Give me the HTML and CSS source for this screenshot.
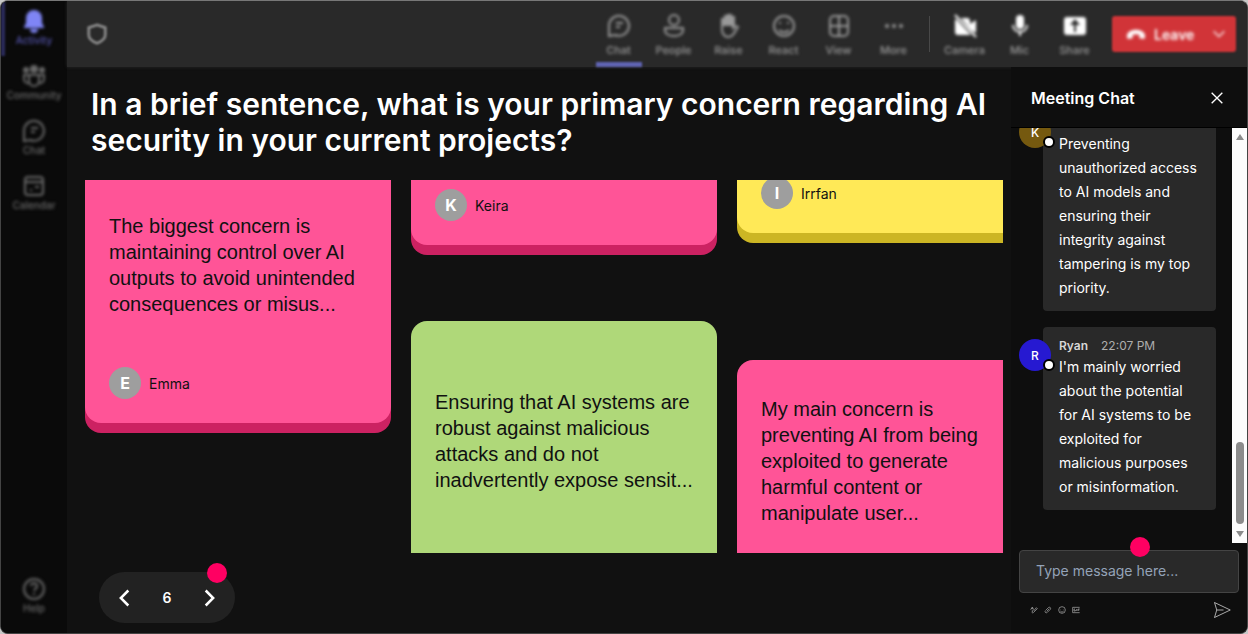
FILE: index.html
```html
<!DOCTYPE html>
<html lang="en">
<head>
<meta charset="utf-8">
<title>Meeting</title>
<link rel="stylesheet" href="styles.css">
</head>
<body>
<div class="app">

  <nav class="rail">
    <a class="rail-item active" href="#">
      <svg viewBox="0 0 24 24"><path fill="currentColor" stroke="none" d="M12 1a8 8 0 0 0-8 8v5l-2 4v1h20v-1l-2-4V9a8 8 0 0 0-8-8zM8 20a4 4 0 0 0 8 0z"/></svg>
      <span>Activity</span>
    </a>
    <a class="rail-item" href="#">
      <svg viewBox="0 0 24 24"><g fill="currentColor" stroke="none"><circle cx="12" cy="5" r="4"/><circle cx="4" cy="6" r="3"/><circle cx="20" cy="6" r="3"/></g><path d="M7 11h10v6a5 5 0 0 1-10 0zM7 11H2v4a4 4 0 0 0 5 4M17 11h5v4a4 4 0 0 1-5 4"/></svg>
      <span>Community</span>
    </a>
    <a class="rail-item" href="#">
      <svg viewBox="0 0 24 24"><path d="M2 22V11a10 10 0 1 1 6 10zM9 9h7M9 13h4"/></svg>
      <span>Chat</span>
    </a>
    <a class="rail-item" href="#">
      <svg viewBox="0 0 24 24"><rect x="3" y="3" width="18" height="18" rx="3"/><path d="M3 8h18M8 16h2M13 13h4"/></svg>
      <span>Calendar</span>
    </a>
    <a class="rail-item help" href="#">
      <svg viewBox="0 0 24 24"><circle cx="12" cy="12" r="10"/><path d="M9 9a3 3 0 1 1 4 3l-1 2M12 16v2"/></svg>
      <span>Help</span>
    </a>
  </nav>

  <div class="stage">
    <header class="topbar">
      <svg class="shield" viewBox="0 0 24 24"><path d="M12 2l9 3v8c0 4-4 7-9 9-5-2-9-5-9-9V5z"/></svg>
      <div class="tools">
        <button class="tool selected"><svg viewBox="0 0 24 24"><path d="M2 22V11a10 10 0 1 1 6 10zM9 9h7M9 13h4"/></svg><span>Chat</span></button>
        <button class="tool"><svg viewBox="0 0 24 24"><circle cx="12" cy="6" r="5"/><path d="M3 14h18v2c0 4-4 6-9 6s-9-2-9-6z"/></svg><span>People</span></button>
        <button class="tool"><svg viewBox="0 0 24 24"><path fill="currentColor" d="M5 11V5h3V2h3V1h3v2h3v8z"/><path d="M5 9v7c0 4 3 7 6 7 5 0 6-4 10-10-2-2-4 0-5 1V5"/></svg><span>Raise</span></button>
        <button class="tool"><svg viewBox="0 0 24 24"><circle cx="12" cy="12" r="10"/><path d="M8 8v2M16 8v2M7 16c3 3 7 3 10 0"/></svg><span>React</span></button>
        <button class="tool"><svg viewBox="0 0 24 24"><rect x="3" y="2" width="18" height="20" rx="4"/><path d="M12 2v20M3 12h18"/></svg><span>View</span></button>
        <button class="tool"><svg viewBox="0 0 24 24"><g fill="currentColor" stroke="none"><circle cx="5" cy="12" r="2"/><circle cx="12" cy="12" r="2"/><circle cx="19" cy="12" r="2"/></g></svg><span>More</span></button>
      </div>
      <div class="tools devices">
        <button class="tool"><svg viewBox="0 0 24 24"><path fill="currentColor" stroke="none" d="M3 5l15 16H5a3 3 0 0 1-3-3V6zM8 4h6a3 3 0 0 1 3 3v3l6-4v13l-5-3z"/><path d="M2 1l21 22"/></svg><span>Camera</span></button>
        <button class="tool"><svg viewBox="0 0 24 24"><rect x="8" y="1" width="8" height="14" rx="4" fill="currentColor" stroke="none"/><path d="M5 11c0 9 14 9 14 0M12 18v4"/></svg><span>Mic</span></button>
        <button class="tool"><svg viewBox="0 0 24 24"><path fill="currentColor" stroke="none" fill-rule="evenodd" d="M4 3h16a3 3 0 0 1 3 3v12a3 3 0 0 1-3 3H4a3 3 0 0 1-3-3V6a3 3 0 0 1 3-3zM12 5l-5 6h4v7h2v-7h4z"/></svg><span>Share</span></button>
      </div>
      <button class="leave">
        <svg viewBox="0 0 24 24"><path fill="currentColor" stroke="none" d="M1 15c0-5 5-8 11-8s11 3 11 8l-1 3-6-1v-4c-3-1-5-1-8 0v4l-6 1z"/></svg>
        <span>Leave</span>
        <svg class="caret" viewBox="0 0 24 24"><path d="M4 8l8 8 8-8"/></svg>
      </button>
    </header>

    <div class="content">
      <main class="question">
        <h1>In a brief sentence, what is your primary concern regarding AI security in your current projects?</h1>

        <div class="board">
          <div class="column">
            <article class="card pink cut-top">
              <p>The biggest concern is maintaining control over AI outputs to avoid unintended consequences or misus...</p>
              <div class="author"><span class="initial">E</span>Emma</div>
            </article>
          </div>
          <div class="column middle">
            <article class="card pink cut-top">
              <div class="author"><span class="initial">K</span>Keira</div>
            </article>
            <article class="card green cut-bottom">
              <p>Ensuring that AI systems are robust against malicious attacks and do not inadvertently expose sensit...</p>
            </article>
          </div>
          <div class="column last">
            <article class="card yellow cut-top">
              <div class="author"><span class="initial">I</span>Irrfan</div>
            </article>
            <article class="card pink cut-bottom">
              <p>My main concern is preventing AI from being exploited to generate harmful content or manipulate user...</p>
            </article>
          </div>
        </div>

        <div class="pager">
          <button aria-label="Previous"><svg viewBox="0 0 24 24"><path d="M16 3l-9 9 9 9"/></svg></button>
          <span>6</span>
          <button aria-label="Next"><svg viewBox="0 0 24 24"><path d="M8 3l9 9-9 9"/></svg></button>
          <i class="marker"></i>
        </div>
      </main>

      <aside class="chat">
        <div class="chat-head">
          <h2>Meeting Chat</h2>
          <button aria-label="Close"><svg viewBox="0 0 24 24"><path d="M4 4l16 16M20 4L4 20"/></svg></button>
        </div>

        <div class="chat-body">
          <div class="messages">
            <div class="message scrolled">
              <span class="avatar gold">K<i></i></span>
              <div class="bubble">
                <p>Preventing unauthorized access to AI models and ensuring their integrity against tampering is my top priority.</p>
              </div>
            </div>
            <div class="message">
              <span class="avatar blue">R<i></i></span>
              <div class="bubble">
                <div class="meta"><b>Ryan</b><time>22:07 PM</time></div>
                <p>I'm mainly worried about the potential for AI systems to be exploited for malicious purposes or misinformation.</p>
              </div>
            </div>
          </div>
          <div class="scrollbar">
            <svg viewBox="0 0 10 8"><path d="M5 1l4 6H1z"/></svg>
            <span class="thumb"></span>
            <svg viewBox="0 0 10 8"><path d="M1 1h8L5 7z"/></svg>
          </div>
        </div>

        <form class="composer">
          <div class="field">
            <input type="text" aria-label="Message" placeholder="Type message here...">
            <i class="marker"></i>
          </div>
          <div class="actions">
            <button type="button" aria-label="Format"><svg viewBox="0 0 24 24"><path d="M2 11l5-8 4 8M4 8h5M5 15c3-3 4 0 2 3s2 4 4 1L22 8l-3-3-8 10"/></svg></button>
            <button type="button" aria-label="Attach"><svg viewBox="0 0 24 24"><path d="M5 13l8-8c4-4 9 1 6 5l-9 9c-4 4-9-1-6-5M8 16l8-8"/></svg></button>
            <button type="button" aria-label="Emoji"><svg viewBox="0 0 24 24"><circle cx="12" cy="12" r="10"/><path d="M8 9v1M16 9v1M7 15c3 4 7 4 10 0"/></svg></button>
            <button type="button" aria-label="GIF"><svg viewBox="0 0 24 24"><path d="M23 4H2v16h21M9 9H6v6h4v-3M14 9v6M18 15V9h5M18 12h4"/></svg></button>
            <button class="send" aria-label="Send"><svg viewBox="0 0 24 24"><path d="M2 2l21 10L2 22l3-10zM5 12h9"/></svg></button>
          </div>
        </form>
      </aside>
    </div>
  </div>

</div>
</body>
</html>
```
FILE: styles.css
```css
* {
  box-sizing: border-box;
}

body {
  margin: 0;
  background: #c8c8c8;
  color: #fff;
  font-family: Inter, "Liberation Sans", sans-serif;
  font-size: 14px;
}

h1, h2, p {
  margin: 0;
}

button {
  padding: 0;
  border: 0;
  background: none;
  color: inherit;
  font: inherit;
}

svg {
  display: block;
  flex: none;
  fill: none;
  stroke: currentColor;
  stroke-width: 2;
}

.app {
  display: flex;
  height: 100vh;
  border: 1px solid #444;
  border-top-color: #777;
  border-radius: 8px;
  background: #111;
  overflow: hidden;
}

/* left rail */
.rail {
  display: flex;
  flex-direction: column;
  width: 66px;
  flex: none;
  padding-bottom: 9px;
  background: #0a0a0a;
}

.rail-item {
  display: flex;
  flex-direction: column;
  align-items: center;
  height: 55px;
  padding-top: 8px;
  color: #6a6a6a;
  font-size: 10px;
  font-weight: 500;
  line-height: 14px;
  text-decoration: none;
}

.rail-item svg,
.tool svg {
  width: 24px;
  height: 24px;
}

/* everything outside the question is out of focus */
.rail-item,
.rail-item svg,
.rail-item span,
.tool,
.tool svg,
.tool span,
.shield,
.leave,
.leave svg,
.leave span {
  filter: blur(1px);
}

.rail-item.active {
  border-left: 4px solid #2c2c5c;
  padding-right: 4px;
  color: #7f85f5;
}

.rail-item.active span {
  color: #5454ac;
}

.rail-item.help {
  margin-top: auto;
}

.stage {
  display: flex;
  flex: 1;
  flex-direction: column;
  min-width: 0;
}

/* top bar */
.topbar {
  display: flex;
  align-items: center;
  height: 66px;
  flex: none;
  padding: 0 11px 0 19px;
  background: #292929;
  box-shadow: 0 0 3px #292929;
}

.shield {
  width: 22px;
  height: 22px;
  margin-right: auto;
  color: #888;
  stroke-width: 3;
}

.tools {
  display: flex;
  align-self: stretch;
}

.tool {
  display: flex;
  flex-direction: column;
  align-items: center;
  gap: 5px;
  width: 55px;
  padding-top: 13px;
  color: #999;
  font-size: 11px;
  font-weight: 500;
  line-height: 14px;
}

.tool.selected::after {
  content: "";
  width: 46px;
  height: 5px;
  background: #6064b4;
}

.devices {
  margin: 0 10px 0 8px;
}

.devices::before {
  content: "";
  align-self: center;
  width: 1px;
  height: 36px;
  margin-right: 7px;
  background: #484848;
}

.devices svg {
  color: #fff;
}

.leave {
  display: flex;
  align-items: center;
  gap: 8px;
  width: 124px;
  height: 36px;
  padding: 0 9px 0 14px;
  border-radius: 3px;
  background: #d13438;
  color: #fff;
  font-weight: 600;
}

.leave svg {
  width: 20px;
  height: 20px;
}

.leave .caret {
  width: 16px;
  height: 16px;
  margin-left: auto;
}

.content {
  display: flex;
  flex: 1;
  min-height: 0;
}

/* question and answers */
.question {
  display: flex;
  flex: 1;
  flex-direction: column;
  min-width: 0;
  padding: 19px 8px 10px 18px;
}

h1 {
  padding-left: 6px;
  font-size: 30px;
  font-weight: 600;
  line-height: 36px;
}

.board {
  display: flex;
  flex: 1;
  gap: 20px;
  margin: 22px 0 19px;
  min-height: 0;
  overflow: hidden;
}

.column {
  display: flex;
  flex: none;
  flex-direction: column;
  align-items: stretch;
  width: 306px;
}

.card {
  padding: 33px 24px 24px;
  border-radius: 16px;
  color: #111;
}

.card p {
  font-family: "Liberation Sans", Arial, sans-serif;
  font-size: 20px;
  line-height: 26px;
}

.card p + .author {
  margin-top: 50px;
}

.cut-top {
  border-top-left-radius: 0;
  border-top-right-radius: 0;
}

.cut-bottom {
  flex: 1;
  border-bottom-left-radius: 0;
  border-bottom-right-radius: 0;
}

.pink {
  background: #ff5497;
  box-shadow: 0 10px #cc2262;
}

.green {
  background: #afd879;
}

.yellow {
  background: #ffe957;
  box-shadow: 0 10px #ccb624;
}

.middle {
  gap: 76px;
}

.middle .cut-top {
  padding-top: 9px;
}

.middle .cut-bottom {
  padding-top: 68px;
}

.last {
  gap: 127px;
  margin-top: -3px;
}

.last .cut-top {
  padding-top: 0;
}

.last .cut-bottom {
  padding-top: 36px;
}

.author {
  display: flex;
  align-items: center;
  gap: 8px;
}

.initial {
  display: grid;
  place-items: center;
  width: 32px;
  height: 32px;
  border-radius: 50%;
  background: #9e9e9e;
  color: #fff;
  font-size: 16px;
  font-weight: 700;
}

.pager {
  position: relative;
  display: flex;
  align-items: center;
  justify-content: space-between;
  align-self: flex-start;
  width: 136px;
  height: 51px;
  margin-left: 14px;
  padding: 0 16px;
  border-radius: 26px;
  background: #222;
  font-weight: 600;
}

.pager svg {
  width: 20px;
  height: 20px;
  stroke-width: 3;
}

.marker {
  position: absolute;
  width: 20px;
  height: 20px;
  border-radius: 50%;
  background: #ff0062;
}

.pager .marker {
  top: -9px;
  right: 8px;
}

/* chat panel */
.chat {
  display: flex;
  flex-direction: column;
  width: 236px;
  flex: none;
  background: #0e0e0e;
}

.chat-head {
  display: flex;
  align-items: center;
  justify-content: space-between;
  height: 61px;
  padding: 2px 22px 0 20px;
  border-bottom: 1px solid #000;
}

h2 {
  font-size: 16px;
  font-weight: 600;
}

.chat-head svg {
  width: 16px;
  height: 16px;
}

.chat-body {
  display: flex;
  flex: 1;
  min-height: 0;
}

.messages {
  display: flex;
  flex: 1;
  flex-direction: column;
  justify-content: flex-end;
  gap: 16px;
  padding: 0 16px 33px 8px;
  overflow: hidden;
}

.message {
  display: flex;
  flex: none;
}

.avatar {
  position: relative;
  display: grid;
  place-items: center;
  flex: none;
  width: 32px;
  height: 32px;
  margin: 12px -8px 0 0;
  border-radius: 50%;
  font-size: 12px;
  font-weight: 500;
}

.avatar i {
  position: absolute;
  right: -4px;
  bottom: 0;
  width: 12px;
  height: 12px;
  border: 2px solid #000;
  border-radius: 50%;
  background: #fff;
}

.gold {
  background: #75590f;
}

.blue {
  background: #2619d1;
}

.bubble {
  flex: 1;
  padding: 10px 16px 11px;
  border-radius: 4px;
  background: #292929;
}

.scrolled .bubble {
  padding-top: 28px;
}

.bubble p {
  line-height: 24px;
}

.meta {
  display: flex;
  gap: 13px;
  color: #adadad;
  font-size: 12px;
  line-height: 18px;
}

.meta b {
  color: #d6d6d6;
  font-weight: 600;
}

.scrollbar {
  display: flex;
  flex-direction: column;
  align-items: center;
  width: 15px;
  padding: 5px 0;
  background: #fcfcfc;
}

.scrollbar svg {
  width: 10px;
  height: 8px;
  fill: #8b8b8b;
  stroke: none;
}

.thumb {
  width: 8px;
  height: 82px;
  margin: auto 0 6px;
  border-radius: 4px;
  background: #8b8b8b;
}

.composer {
  padding: 7px 8px 14px;
}

.field {
  position: relative;
}

.field input {
  display: block;
  width: 100%;
  height: 43px;
  padding: 0 16px 2px;
  border: 1px solid #444;
  border-radius: 4px;
  background: #292929;
  color: #fff;
  font: inherit;
}

.field input::placeholder {
  color: #94a3b8;
}

.field .marker {
  top: -13px;
  left: calc(50% + 1px);
}

.actions {
  display: flex;
  align-items: center;
  gap: 6px;
  padding: 8px 8px 0 11px;
  color: #b4b4b4;
}

.actions svg {
  width: 8px;
  height: 8px;
}

.actions .send {
  margin-left: auto;
  color: #ddd;
}

.send svg {
  width: 18px;
  height: 18px;
  stroke-width: 1;
}
```
